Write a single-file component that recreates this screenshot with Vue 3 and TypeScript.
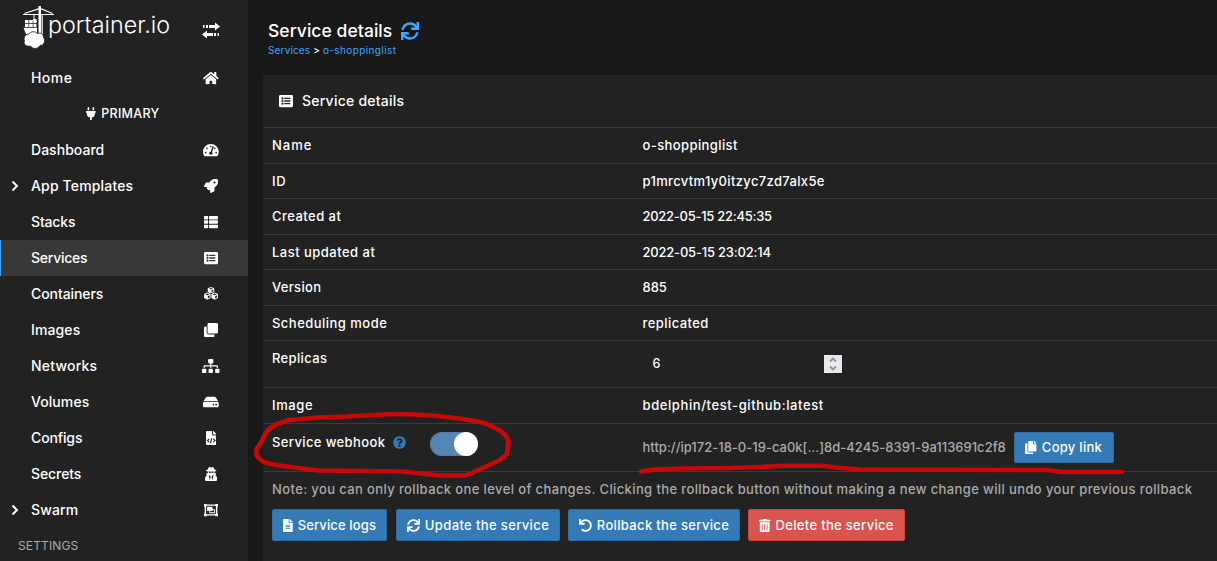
<script setup lang="ts">
import type { Directive } from 'vue'

interface Icon { w: number; d: string }
interface NavItem { label: string; width: number; icon: string; expandable?: boolean; active?: boolean }
interface Row { label: string; labelWidth: number; value: string; valueWidth: number; height: number }
interface Action { label: string; width: number; icon: string; box: number; danger?: boolean }

// Spreads a label's letters over a given width in pixels.
const vFit: Directive<HTMLElement, number> = {
  mounted(el, binding) {
    const count = (el.textContent ?? '').length
    const natural = el.getBoundingClientRect().width
    el.style.letterSpacing = `${(binding.value + 0.3 - natural) / count}px`
  },
}

const icons: Record<string, Icon> = {
  home: { w: 576, d: 'M280.37 148.26L96 300.11V464a16 16 0 0 0 16 16l112.06-.29a16 16 0 0 0 15.92-16V368a16 16 0 0 1 16-16h64a16 16 0 0 1 16 16v95.64a16 16 0 0 0 16 16.05L464 480a16 16 0 0 0 16-16V300L295.67 148.26a12.19 12.19 0 0 0-15.3 0zM571.6 251.47L488 182.56V44.05a12 12 0 0 0-12-12h-56a12 12 0 0 0-12 12v72.61L318.47 43a48 48 0 0 0-61 0L4.34 251.47a12 12 0 0 0-1.6 16.9l25.5 31A12 12 0 0 0 45.15 301l235.22-193.74a12.19 12.19 0 0 1 15.3 0L530.9 301a12 12 0 0 0 16.9-1.6l25.5-31a12 12 0 0 0-1.7-16.93z' },
  plug: { w: 384, d: 'M320,32a32,32,0,0,0-64,0v96h64Zm48,128H16A16,16,0,0,0,0,176v32a16,16,0,0,0,16,16H32v32A160.07,160.07,0,0,0,160,412.8V512h64V412.8A160.07,160.07,0,0,0,352,256V224h16a16,16,0,0,0,16-16V176A16,16,0,0,0,368,160ZM128,32a32,32,0,0,0-64,0v96h64Z' },
  gauge: { w: 576, d: 'M288 32C128.94 32 0 160.94 0 320c0 52.8 14.25 102.26 39.06 144.8 5.61 9.62 16.3 15.2 27.44 15.2h443c11.14 0 21.83-5.58 27.44-15.2C561.75 422.26 576 372.8 576 320c0-159.06-128.94-288-288-288zm0 64c14.71 0 26.58 10.13 30.32 23.65-1.11 2.26-2.64 4.23-3.45 6.67l-9.22 27.67c-5.13 3.49-10.97 6.01-17.64 6.01-17.67 0-32-14.33-32-32S270.33 96 288 96zM96 384c-17.67 0-32-14.33-32-32s14.33-32 32-32 32 14.33 32 32-14.33 32-32 32zm48-160c-17.67 0-32-14.33-32-32s14.33-32 32-32 32 14.33 32 32-14.33 32-32 32zm246.77-72.41l-61.33 184C343.13 347.33 352 364.54 352 384c0 11.72-3.38 22.55-8.88 32H232.88c-5.5-9.45-8.88-20.28-8.88-32 0-33.94 26.5-61.43 59.9-63.59l61.34-184.01c4.17-12.56 17.73-19.45 30.36-15.17 12.57 4.19 19.35 17.79 15.17 30.36zm14.66 57.2l15.52-46.55c3.47-1.29 7.13-2.23 11.05-2.23 17.67 0 32 14.33 32 32s-14.33 32-32 32c-11.38-.01-20.89-6.28-26.57-15.22zM480 384c-17.67 0-32-14.33-32-32s14.33-32 32-32 32 14.33 32 32-14.33 32-32 32z' },
  rocket: { w: 512, d: 'M505.12 19.094c-1.19-5.532-6.658-11-12.207-12.188C460.716 0 435.507 0 410.407 0 307.175 0 245.27 55.203 199.052 128H94.838c-16.348.016-35.557 11.875-42.887 26.484L2.516 253.297A28.4 28.4 0 0 0 0 264a24 24 0 0 0 24.006 24h103.81l-22.474 22.469c-11.366 11.361-12.996 32.258 0 45.25l50.904 50.906c11.156 11.188 32.156 13.156 45.277 0l22.475-22.469V488a24 24 0 0 0 24.005 24 28.56 28.56 0 0 0 10.707-2.516l98.729-49.39c14.628-7.297 26.507-26.5 26.507-42.86V312.797c72.598-46.313 128.035-108.406 128.035-211.094.094-25.203.094-50.406-6.86-82.61zM384.04 168a40 40 0 1 1 40.01-40 40 40 0 0 1-40.01 40z' },
  thlist: { w: 512, d: 'M24 32h101c13 0 24 11 24 24v80c0 13-11 24-24 24H24c-13 0-24-11-24-24V56c0-13 11-24 24-24zm181 0h283c13 0 24 11 24 24v80c0 13-11 24-24 24H205c-13 0-24-11-24-24V56c0-13 11-24 24-24zM24 192h101c13 0 24 11 24 24v80c0 13-11 24-24 24H24c-13 0-24-11-24-24v-80c0-13 11-24 24-24zm181 0h283c13 0 24 11 24 24v80c0 13-11 24-24 24H205c-13 0-24-11-24-24v-80c0-13 11-24 24-24zM24 352h101c13 0 24 11 24 24v80c0 13-11 24-24 24H24c-13 0-24-11-24-24v-80c0-13 11-24 24-24zm181 0h283c13 0 24 11 24 24v80c0 13-11 24-24 24H205c-13 0-24-11-24-24v-80c0-13 11-24 24-24z' },
  listalt: { w: 512, d: 'M48 32h416c27 0 48 21 48 48v352c0 27-21 48-48 48H48c-27 0-48-21-48-48V80c0-27 21-48 48-48zM128 120a40 40 0 1 0 0 80 40 40 0 1 0 0-80zm0 96a40 40 0 1 0 0 80 40 40 0 1 0 0-80zm0 96a40 40 0 1 0 0 80 40 40 0 1 0 0-80zM204 136c-7 0-12 5-12 12v24c0 7 5 12 12 12h200c7 0 12-5 12-12v-24c0-7-5-12-12-12zm0 96c-7 0-12 5-12 12v24c0 7 5 12 12 12h200c7 0 12-5 12-12v-24c0-7-5-12-12-12zm0 96c-7 0-12 5-12 12v24c0 7 5 12 12 12h200c7 0 12-5 12-12v-24c0-7-5-12-12-12z' },
  cubes: { w: 512, d: 'M256 0l118 44v136l-118 52-118-52V44zM256 36l-72 27 72 29 72-29zM274 125v67l64-28V99zM122 204l118 48v148l-118 62L4 400V252zM122 240l-73 30 73 31 73-31zM140 334v82l66-35v-75zM390 204l118 48v148l-118 62-118-62V252zM390 240l-73 30 73 31 73-31zM408 334v82l66-35v-75z' },
  clone: { w: 512, d: 'M464 0c26.51 0 48 21.49 48 48v288c0 26.51-21.49 48-48 48H176c-26.51 0-48-21.49-48-48V48c0-26.51 21.49-48 48-48h288M176 416c-44.112 0-80-35.888-80-80V128H48c-26.51 0-48 21.49-48 48v288c0 26.51 21.49 48 48 48h288c26.51 0 48-21.49 48-48v-48H176z' },
  sitemap: { w: 640, d: 'M128 352H32c-17.67 0-32 14.33-32 32v96c0 17.67 14.33 32 32 32h96c17.67 0 32-14.33 32-32v-96c0-17.67-14.33-32-32-32zm-24-80h192v48h48v-48h192v48h48v-57.59c0-21.17-17.23-38.41-38.41-38.41H344v-64h40c17.67 0 32-14.33 32-32V32c0-17.67-14.33-32-32-32H256c-17.67 0-32 14.33-32 32v96c0 17.67 14.33 32 32 32h40v64H94.41C73.23 224 56 241.23 56 262.41V320h48v-48zm264 80h-96c-17.67 0-32 14.33-32 32v96c0 17.67 14.33 32 32 32h96c17.67 0 32-14.33 32-32v-96c0-17.67-14.33-32-32-32zm240 0h-96c-17.67 0-32 14.33-32 32v96c0 17.67 14.33 32 32 32h96c17.67 0 32-14.33 32-32v-96c0-17.67-14.33-32-32-32z' },
  hdd: { w: 576, d: 'M576 304v96c0 26.51-21.49 48-48 48H48c-26.51 0-48-21.49-48-48v-96c0-26.51 21.49-48 48-48h480c26.51 0 48 21.49 48 48zm-48-80a79.557 79.557 0 0 1 30.777 6.165L462.25 85.374A48.003 48.003 0 0 0 422.311 64H153.689a48 48 0 0 0-39.938 21.374L17.223 230.165A79.557 79.557 0 0 1 48 224h480zm-48 96c-17.673 0-32 14.327-32 32s14.327 32 32 32 32-14.327 32-32-14.327-32-32-32zm-96 0c-17.673 0-32 14.327-32 32s14.327 32 32 32 32-14.327 32-32-14.327-32-32-32z' },
  filecode: { w: 384, d: 'M256 0v128h128v-6c0-7-3-13-7-17L279 7c-5-4-11-7-17-7zM224 136V0H24C11 0 0 11 0 24v464c0 13 11 24 24 24h336c13 0 24-11 24-24V160H248c-13 0-24-11-24-24zM123 401l-19 20-70-66c-5-4-5-12 0-17l70-66 27 29-48 51 48 44zM168 450l-27-8 54-186 37 11-54 186zM280 421l-27-29 48-40-48-51 27-29 70 66c5 5 5 13 0 17z' },
  spy: { w: 448, d: 'M383.9 308.3l23.9-62.6c4-10.5-3.7-21.7-15-21.7h-58.5c11-18.9 17.8-40.6 17.8-64v-.3c39.2-7.8 64-19.1 64-31.7 0-13.3-27.3-25.1-70.1-33-9.2-32.8-27-65.8-40.6-82.8-9.5-11.9-25.9-15.6-39.5-8.8l-27.6 13.8c-9 4.5-19.6 4.5-28.6 0L182.1 3.4c-13.6-6.8-30-3.1-39.5 8.8-13.5 17-31.4 50-40.6 82.8-42.7 7.9-70 19.7-70 33 0 12.6 24.8 23.9 64 31.7v.3c0 23.4 6.8 45.1 17.8 64H56.3c-11.5 0-19.2 11.7-14.7 22.3l25.8 60.2C27.3 329.8 0 372.7 0 422.4v44.8C0 491.9 20.1 512 44.8 512h358.4c24.7 0 44.8-20.1 44.8-44.8v-44.8c0-48.4-25.8-90.4-64.1-114.1zM176 480l-41.6-192 49.6 32 24 40-32 120zm96 0l-32-120 24-40 49.6-32L272 480zm41.7-298.5c-3.9 11.9-7 24.6-16.5 33.4-10.1 9.3-48 22.4-64-25-2.8-8.4-15.4-8.4-18.3 0-17 50.2-56 32.4-64 25-9.5-8.8-12.7-21.5-16.5-33.4-.8-2.5-6.3-5.7-6.3-5.8v-10.8c28.3 3.6 61 5.8 96 5.8s67.7-2.1 96-5.8v10.8c-.1.1-5.6 3.2-6.4 5.8z' },
  group: { w: 512, d: 'M0 32h96v24h320V32h96v96h-24v256h24v96h-96v-24H96v24H0v-96h24V128H0zM76 120v272h24v20h312v-20h24V120h-24v-20H100v20zM112 140h200v84h88v148H192v-84h-80zM316 256v36h-92v48h144v-84z' },
  sync: { w: 512, d: 'M440.65 12.57l4 82.77A247.16 247.16 0 0 0 255.83 8C134.73 8 33.91 94.92 12.29 209.82A12 12 0 0 0 24.09 224h49.05a12 12 0 0 0 11.67-9.26 175.91 175.91 0 0 1 317-56.94l-101.46-4.86a12 12 0 0 0-12.57 12v47.41a12 12 0 0 0 12 12H500a12 12 0 0 0 12-12V12a12 12 0 0 0-12-12h-47.37a12 12 0 0 0-11.98 12.57zM255.83 432a175.61 175.61 0 0 1-146-77.8l101.8 4.87a12 12 0 0 0 12.57-12v-47.4a12 12 0 0 0-12-12H12a12 12 0 0 0-12 12V500a12 12 0 0 0 12 12h47.35a12 12 0 0 0 12-12.6l-4.15-82.57A247.17 247.17 0 0 0 255.83 504c121.11 0 221.93-86.92 243.55-201.82a12 12 0 0 0-11.8-14.18h-49.05a12 12 0 0 0-11.67 9.26A175.86 175.86 0 0 1 255.83 432z' },
  undo: { w: 512, d: 'M212.333 224.333H12c-6.627 0-12-5.373-12-12V12C0 5.373 5.373 0 12 0h48c6.627 0 12 5.373 12 12v78.112C117.773 39.279 184.26 7.47 258.175 8.007c136.906.994 246.448 111.623 246.157 248.532C504.041 393.258 393.12 504 256.333 504c-64.089 0-122.496-24.313-166.51-64.215-5.099-4.622-5.334-12.554-.467-17.42l33.967-33.967c4.474-4.474 11.662-4.717 16.401-.525C170.76 415.336 211.58 432 256.333 432c97.268 0 176-78.716 176-176 0-97.267-78.716-176-176-176-58.496 0-110.28 28.476-142.274 72.333h98.274c6.627 0 12 5.373 12 12v48c0 6.627-5.373 12-12 12z' },
  trash: { w: 448, d: 'M32 464a48 48 0 0 0 48 48h288a48 48 0 0 0 48-48V128H32zm272-256a16 16 0 0 1 32 0v224a16 16 0 0 1-32 0zm-96 0a16 16 0 0 1 32 0v224a16 16 0 0 1-32 0zm-96 0a16 16 0 0 1 32 0v224a16 16 0 0 1-32 0zM432 32H312l-9.4-18.7A24 24 0 0 0 281.1 0H166.8a23.72 23.72 0 0 0-21.4 13.3L136 32H16A16 16 0 0 0 0 48v32a16 16 0 0 0 16 16h416a16 16 0 0 0 16-16V48a16 16 0 0 0-16-16z' },
  file: { w: 384, d: 'M224 136V0H24C10.7 0 0 10.7 0 24v464c0 13.3 10.7 24 24 24h336c13.3 0 24-10.7 24-24V160H248c-13.2 0-24-10.8-24-24zm64 236c0 6.6-5.4 12-12 12H108c-6.6 0-12-5.4-12-12v-8c0-6.6 5.4-12 12-12h168c6.6 0 12 5.4 12 12v8zm0-64c0 6.6-5.4 12-12 12H108c-6.6 0-12-5.4-12-12v-8c0-6.6 5.4-12 12-12h168c6.6 0 12 5.4 12 12v8zm0-72v8c0 6.6-5.4 12-12 12H108c-6.6 0-12-5.4-12-12v-8c0-6.6 5.4-12 12-12h168c6.6 0 12 5.4 12 12zm96-114.1v6.1H256V0h6.1c6.4 0 12.5 2.5 17 7l97.9 98c4.5 4.5 7 10.6 7 16.9z' },
  copy: { w: 448, d: 'M320 448v40c0 13.255-10.745 24-24 24H24c-13.255 0-24-10.745-24-24V120c0-13.255 10.745-24 24-24h72v296c0 30.879 25.121 56 56 56h168zm0-344V0H152c-13.255 0-24 10.745-24 24v368c0 13.255 10.745 24 24 24h272c13.255 0 24-10.745 24-24V128H344c-13.2 0-24-10.8-24-24zm120.971-31.029L375.029 7.029A24 24 0 0 0 358.059 0H352v96h96v-6.059a24 24 0 0 0-7.029-16.97z' },
  question: { w: 512, d: 'M504 256c0 136.997-111.043 248-248 248S8 392.997 8 256C8 119.083 119.043 8 256 8s248 111.083 248 248zM262.655 90c-54.497 0-89.255 22.957-116.549 63.758-3.536 5.286-2.353 12.415 2.715 16.258l34.699 26.31c5.205 3.947 12.621 3.008 16.665-2.122 17.864-22.658 30.113-35.797 57.303-35.797 20.429 0 45.698 13.148 45.698 32.958 0 14.976-12.363 22.667-32.534 33.976C247.128 238.528 216 254.941 216 296v4c0 6.627 5.373 12 12 12h56c6.627 0 12-5.373 12-12v-1.333c0-28.462 83.186-29.647 83.186-106.667 0-58.002-60.165-102-116.531-102zM256 338c-25.365 0-46 20.635-46 46 0 25.364 20.635 46 46 46s46-20.636 46-46c0-25.365-20.635-46-46-46z' },
}
const box = (name: string) => `0 0 ${icons[name].w} 512`

const nav: NavItem[] = [
  { label: 'Dashboard', width: 73, icon: 'gauge' },
  { label: 'App Templates', width: 102, icon: 'rocket', expandable: true },
  { label: 'Stacks', width: 44, icon: 'thlist' },
  { label: 'Services', width: 56, icon: 'listalt', active: true },
  { label: 'Containers', width: 72, icon: 'cubes' },
  { label: 'Images', width: 49, icon: 'clone' },
  { label: 'Networks', width: 66, icon: 'sitemap' },
  { label: 'Volumes', width: 58, icon: 'hdd' },
  { label: 'Configs', width: 51, icon: 'filecode' },
  { label: 'Secrets', width: 50, icon: 'spy' },
  { label: 'Swarm', width: 47, icon: 'group', expandable: true },
]

const rows: Row[] = [
  { label: 'Name', labelWidth: 40, value: 'o-shoppinglist', valueWidth: 95, height: 36 },
  { label: 'ID', labelWidth: 14, value: 'p1mrcvtm1y0itzyc7zd7alx5e', valueWidth: 182, height: 35 },
  { label: 'Created at', labelWidth: 69, value: '2022-05-15 22:45:35', valueWidth: 129, height: 36 },
  { label: 'Last updated at', labelWidth: 103, value: '2022-05-15 23:02:14', valueWidth: 128, height: 35 },
  { label: 'Version', labelWidth: 49, value: '885', valueWidth: 24, height: 36 },
  { label: 'Scheduling mode', labelWidth: 115, value: 'replicated', valueWidth: 66, height: 35 },
]

const actions: Action[] = [
  { label: 'Service logs', width: 78, icon: 'file', box: 115 },
  { label: 'Update the service', width: 124, icon: 'sync', box: 164 },
  { label: 'Rollback the service', width: 132, icon: 'undo', box: 172 },
  { label: 'Delete the service', width: 118, icon: 'trash', box: 157, danger: true },
]
</script>

<template>
  <div class="page">
    <aside class="sidebar">
      <div class="brand">
        <svg class="logo" viewBox="0 0 150 46" width="150" height="46">
          <g fill="none" stroke="#fff">
            <path d="M0 10.5H31M19.200 11v24M1.500 9.500L17 4.500 29.500 9.500" stroke-width="1.200" />
            <path d="M11 11v5M8 18l3-3 3 3" stroke-width="1" />
          </g>
          <g fill="#fff">
            <path d="M15.500 2h2.500v32h-2.500zM2 16h3.500v3H2zM6.200 16h3.500v3H6.200zM10.400 15h3v4h-3zM2 19.800h3.500V23H2zM6.200 19.800h3.500V23H6.200zM10.400 19.800h3V23h-3z" />
            <path d="M.5 23.800H14V30H3z" />
            <path d="M6 30c2-3 6-3 8-.5 3-1 6.500 0 6.500 4 2.500 3 .5 8-3.500 8-2 4-8 3.500-9.500.5C3 43 0 40 1.500 36.500 0 33 3 30 6 30z" stroke="#222" stroke-width=".8" />
          </g>
          <text x="25" y="29" textLength="122" lengthAdjust="spacingAndGlyphs">portainer.io</text>
        </svg>
        <svg class="swap" viewBox="0 0 18 18" width="18" height="18" fill="#fff">
          <path d="M1 4h1.500v3H1zM4 4h2v3H4zM7 4h6V1.500l5 4-5 4V7H7zM17 12h-1.500v3H17zM14 12h-2v3h2zM11 12H5V9.500l-5 4 5 4V15h6z" />
        </svg>
      </div>

      <div class="nav-item">
        <span v-fit="41">Home</span>
        <i class="nav-icon"><svg :viewBox="box('home')" height="14"><path :d="icons.home.d" /></svg></i>
      </div>
      <div class="endpoint">
        <svg :viewBox="box('plug')" height="13"><path :d="icons.plug.d" /></svg>
        <span v-fit="58">PRIMARY</span>
      </div>
      <div v-for="item in nav" :key="item.label" class="nav-item" :class="{ active: item.active }">
        <svg v-if="item.expandable" class="chevron" viewBox="0 0 8 12" width="8" height="12"><path d="M1.500 1.500L6 6l-4.500 4.500" /></svg>
        <span v-fit="item.width">{{ item.label }}</span>
        <i class="nav-icon"><svg :viewBox="box(item.icon)" height="14"><path fill-rule="evenodd" :d="icons[item.icon].d" /></svg></i>
      </div>
      <div class="section"><span v-fit="60">SETTINGS</span></div>
    </aside>

    <main class="main">
      <header class="heading">
        <h1><span v-fit="124">Service details</span><svg :viewBox="box('sync')" height="18"><path :d="icons.sync.d" /></svg></h1>
        <div class="crumbs"><a v-fit="42">Services</a><b>&gt;</b><a v-fit="73">o-shoppinglist</a></div>
      </header>

      <section class="panel">
        <div class="panel-head">
          <svg :viewBox="box('listalt')" height="14"><path fill-rule="evenodd" :d="icons.listalt.d" /></svg>
          <span v-fit="102">Service details</span>
        </div>
        <div v-for="row in rows" :key="row.label" class="row" :style="{ height: row.height + 'px' }">
          <div class="label"><span v-fit="row.labelWidth">{{ row.label }}</span></div>
          <div class="value"><span v-fit="row.valueWidth">{{ row.value }}</span></div>
        </div>
        <div class="row replicas">
          <div class="label"><span v-fit="55">Replicas</span></div>
          <div class="number">
            <span>6</span>
            <svg class="spinner" viewBox="0 0 18 18" width="18" height="18"><path d="M6 6.500L9 3.500l3 3M6 11.500l3 3 3-3" /></svg>
          </div>
        </div>
        <div class="row image">
          <div class="label"><span v-fit="41">Image</span></div>
          <div class="value"><span v-fit="181">bdelphin/test-github:latest</span></div>
        </div>
        <div class="row webhook">
          <div class="label">
            <span v-fit="113">Service webhook</span>
            <svg class="help" :viewBox="box('question')" height="13"><path :d="icons.question.d" /></svg>
            <div class="toggle"><div class="knob"></div></div>
          </div>
          <div class="link">
            <span v-fit="363">http://ip172-18-0-19-ca0k[...]8d-4245-8391-9a113691c2f8</span>
            <button class="btn copy"><svg :viewBox="box('copy')" height="13"><path :d="icons.copy.d" /></svg><span v-fit="60">Copy link</span></button>
          </div>
        </div>
        <div class="foot">
          <p><span v-fit="920">Note: you can only rollback one level of changes. Clicking the rollback button without making a new change will undo your previous rollback</span></p>
          <div class="actions">
            <button v-for="a in actions" :key="a.label" class="btn" :class="{ danger: a.danger }" :style="{ width: a.box + 'px' }">
              <svg :viewBox="box(a.icon)" height="13"><path :d="icons[a.icon].d" /></svg><span v-fit="a.width">{{ a.label }}</span>
            </button>
          </div>
        </div>
      </section>
    </main>

    <svg class="marks" viewBox="0 0 1217 561" width="1217" height="561">
      <path d="M290 419.500L275 425Q268 429 265 434L260 444 256.500 449V455Q260 461 268 463.500L283 466 317 470.500 365 471 403 471.500 425 474 443 475.500H466L483 468 500 460 507 454 508.500 441Q506 434 499 430L487 424 476 421 455 418 437 416 415 414.500 393 414 365 415.500 347 416.500 317 417.500 287 420.500" />
      <path d="M641 471.500L655 469.500 680 468.500 730 468 760 467 783 465.800H823L835 467.500 860 469.500 897 469.800 1047 470 1061 472H1122" />
    </svg>
  </div>
</template>

<style>
body { margin: 0; background: #181818; overflow: hidden; }
</style>

<style scoped>
.page { position: relative; display: flex; width: 1217px; height: 561px; overflow: hidden; background: #181818; color: #fff; font: 500 13px/18px Inter, "Open Sans", sans-serif; }
span, a { white-space: nowrap; }
span { display: inline-block; }
svg { display: block; flex: none; fill: currentColor; }

.sidebar { flex: none; width: 248px; height: 561px; background: #222; font-size: 14px; }
.brand { display: flex; height: 60px; padding-left: 23px; box-sizing: border-box; }
.logo { margin-top: 4px; overflow: visible; }
.logo text { font-family: Inter, sans-serif; font-size: 23.500px; font-weight: 300; fill: #fff; }
.swap { margin: 21px 0 0 29px; }
.nav-item { position: relative; display: flex; align-items: center; justify-content: space-between; height: 36px; padding: 0 26px 0 31px; box-sizing: border-box; }
.nav-item.active { background: #383838; box-shadow: inset 1px 0 #3ea5ff; }
.nav-icon { display: flex; justify-content: center; width: 22px; }
.chevron { position: absolute; left: 11px; top: 12px; fill: none; stroke: #fff; stroke-width: 2; }
.endpoint { display: flex; align-items: center; justify-content: center; gap: 5px; height: 36px; padding: 0 2px 1px 0; box-sizing: border-box; font-size: 12.500px; }
.section { display: flex; align-items: center; height: 35px; padding-left: 18px; color: #aaa; font-size: 12px; font-weight: 400; }

.main { flex: 1; min-width: 0; padding-left: 15px; }
.heading { height: 75px; padding: 20px 0 0 5px; box-sizing: border-box; }
h1 { display: flex; align-items: center; gap: 9px; height: 22px; margin: 0; font-size: 17.500px; font-weight: 500; }
h1 svg { color: #3ea5ff; }
.crumbs { display: flex; gap: 3px; height: 16px; font-size: 10px; line-height: 16px; }
.crumbs a { color: #3ea5ff; font-weight: 400; }
.crumbs b { font-weight: 500; }

.panel { height: 486px; background: #222; }
.panel-head { display: flex; align-items: center; gap: 9px; height: 52px; padding-left: 16px; font-size: 14px; }
.row { display: flex; box-sizing: border-box; margin-left: 1px; padding: 8px 0 0 8px; border-top: 1px solid #3b3b3b; }
.label { display: flex; flex: none; width: 370.500px; height: 18px; }
.replicas { height: 47px; }
.number { display: flex; align-items: center; justify-content: space-between; width: 199px; height: 30px; padding-left: 10px; box-sizing: border-box; font-size: 12.500px; }
.spinner { background: #e9e9ed; fill: none; stroke: #8f8f9d; stroke-width: 1.800; }
.image { height: 36px; }
.webhook { height: 48px; padding-top: 9px; }
.help { margin: 3px 0 0 8px; color: #337ab7; }
.toggle { display: flex; justify-content: flex-end; width: 48px; height: 24px; margin: -1px 0 0 24px; border-radius: 12px; background: #5686b2; box-shadow: inset 0 0 2px #326b9d; }
.knob { width: 24px; height: 24px; border-radius: 50%; background: #fff; }
.link { display: flex; align-items: center; gap: 8px; height: 30px; margin-top: -1px; color: #aaa; font-weight: 500; }
.btn { display: flex; align-items: center; justify-content: center; gap: 5px; height: 32px; padding: 0; box-sizing: border-box; border: 1px solid #2e6da4; border-radius: 2px; background: #337ab7; color: #fff; font: inherit; font-weight: 500; }
.btn.danger { background: #d9534f; border-color: #d43f3a; }
.btn.copy { width: 100px; height: 31px; }
.foot { margin-left: 1px; padding: 8px 0 0 8px; border-top: 1px solid #3b3b3b; }
.foot p { height: 18px; margin: 0 0 11px; color: #aaa; font-weight: 500; }
.actions { display: flex; gap: 8px; }
.actions .btn:first-child { margin-right: 1px; }

.marks { position: absolute; inset: 0; fill: none; stroke: #c60808; stroke-width: 4.600; stroke-linejoin: round; stroke-linecap: round; pointer-events: none; }
</style>
